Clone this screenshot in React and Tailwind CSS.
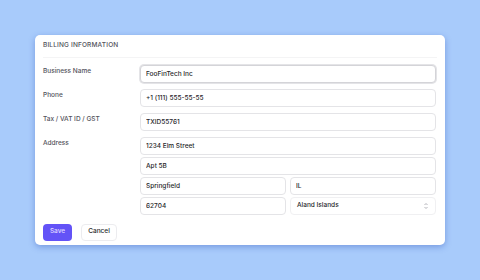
import React from "react";

const inputCls =
  "h-[18px] w-full rounded-[4px] border border-[#e4e4e7] bg-white px-[5px] text-[6.5px] font-medium text-[#27272a] outline-none";

const Row = ({ label, children }) => (
  <div className="flex">
    <div className="w-[97px] shrink-0 pt-[2px] text-[6.5px] font-medium text-[#52525b]">{label}</div>
    <div className="flex flex-1 flex-col gap-[2px]">{children}</div>
  </div>
);

export default function App() {
  return (
    <div
      className="flex h-[280px] w-[480px] items-start bg-[#a8cbfb] pl-[35px] pt-[35px]"
      style={{ fontFamily: "Inter, 'Noto Sans', sans-serif" }}
    >
      <div className="h-[210px] w-[410px] rounded-[5px] bg-white shadow-[0_2px_6px_rgba(30,64,175,0.35)]">
        <div className="mx-[8px] border-b border-[#f4f4f5] pb-[6px] pt-[6px] text-[6.5px] font-medium tracking-wide text-[#52525b]">
          BILLING INFORMATION
        </div>
        <div className="flex flex-col gap-[6px] pl-[8px] pr-[9px] pt-[7px]">
          <Row label="Business Name">
            <input
              className="h-[18px] w-full rounded-[4px] border border-[#d4d4d8] bg-white px-[5px] text-[6.5px] font-medium text-[#27272a] shadow-[0_0_0_1px_#e4e4e7] outline-none"
              defaultValue="FooFinTech Inc"
            />
          </Row>
          <Row label="Phone">
            <input className={inputCls} defaultValue="+1 (111) 555-55-55" />
          </Row>
          <Row label="Tax / VAT ID / GST">
            <input className={inputCls} defaultValue="TXID55761" />
          </Row>
          <Row label="Address">
            <input className={inputCls} defaultValue="1234 Elm Street" />
            <input className={inputCls} defaultValue="Apt 5B" />
            <div className="grid grid-cols-2 gap-[4px]">
              <input className={inputCls} defaultValue="Springfield" />
              <input className={inputCls} defaultValue="IL" />
            </div>
            <div className="grid grid-cols-2 gap-[4px]">
              <input className={inputCls} defaultValue="62704" />
              <div className="flex h-[18px] items-center justify-between rounded-[4px] border border-[#f0f0f2] bg-white pl-[6px] pr-[6px] text-[6.5px] font-medium text-[#27272a]">
                <span>Aland Islands</span>
                <svg width="6" height="8" viewBox="0 0 6 8" fill="none" stroke="#a1a1aa" strokeWidth="0.8">
                  <path d="M1.5 3 L3 1.5 L4.5 3" />
                  <path d="M1.5 5 L3 6.5 L4.5 5" />
                </svg>
              </div>
            </div>
          </Row>
        </div>
        <div className="flex gap-[9px] pl-[8px] pt-[9px]">
          <button className="h-[17px] w-[29px] rounded-[4px] bg-[#6353f7] text-[6.5px] font-medium text-[#e0dcff]">
            Save
          </button>
          <button className="h-[17px] w-[36px] rounded-[4px] border border-[#ececef] bg-white text-[6.5px] font-medium text-[#27272a]">
            Cancel
          </button>
        </div>
      </div>
    </div>
  );
}
